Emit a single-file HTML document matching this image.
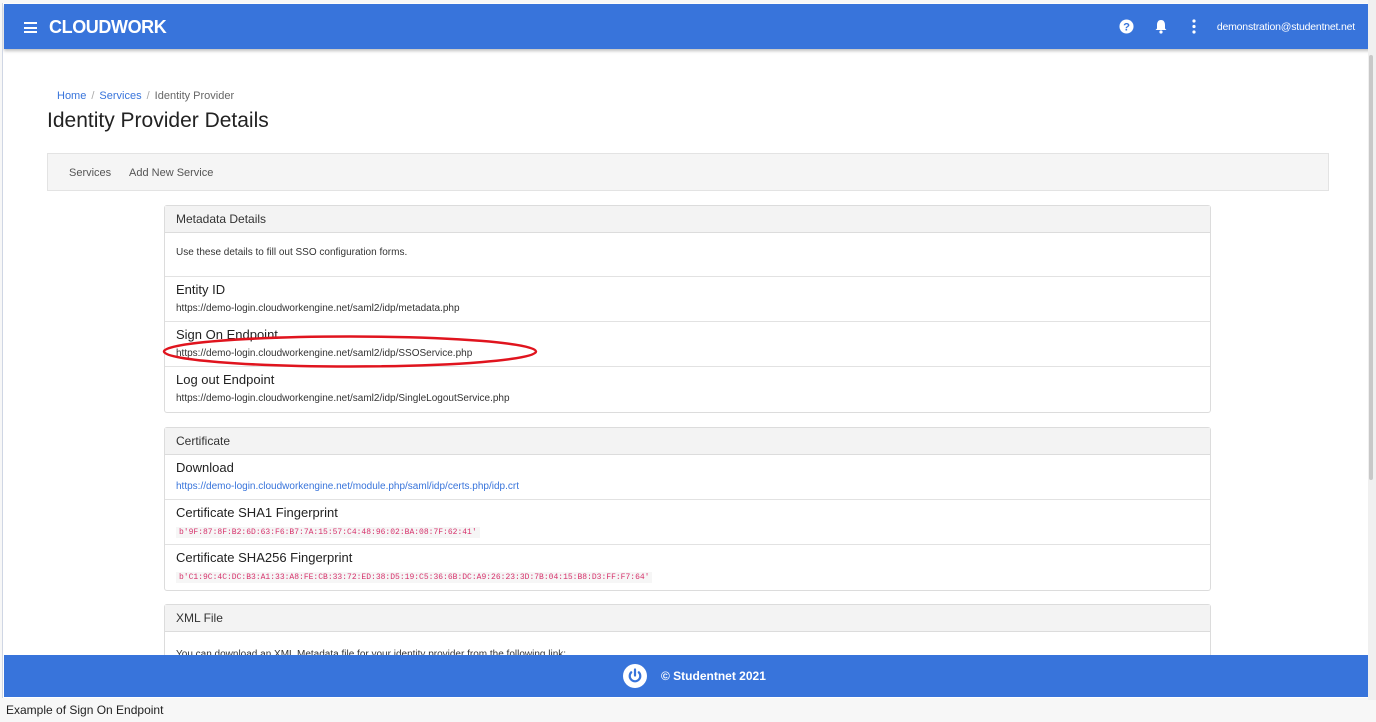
<!DOCTYPE html>
<html><head><style>
*{box-sizing:border-box;margin:0;padding:0}
body{width:1376px;height:722px;overflow:hidden;background:#f7f7f7;font-family:"Liberation Sans",Arial,sans-serif;position:relative}
.frame{position:absolute;left:2px;top:3px;width:1369px;height:695px;background:#fff;border-left:1px solid #cfd6e4;overflow:hidden}
.nav{position:absolute;left:1px;top:1px;right:0;height:45px;background:#3874db;box-shadow:0 2px 3px rgba(0,0,0,.25);color:#fff}
.logo{position:absolute;left:45px;top:13px;font-weight:bold;font-size:18px;letter-spacing:-.4px}
.ham{position:absolute;left:20px;top:18px;width:13px}
.ham i{display:block;height:2px;background:#fff;margin-bottom:2.5px}
.user{position:absolute;right:16px;top:17px;font-size:10.5px;letter-spacing:-.2px}
.sb{position:absolute;left:1368px;top:0;width:8px;height:700px;background:#f0f0f0}
.sb i{position:absolute;left:1px;top:55px;width:4px;height:425px;background:#c8c8c8;border-radius:2px}
.bc{position:absolute;left:54px;top:87px;font-size:11px;color:#666}
.bc a{color:#3874db}
.bc s{text-decoration:none;color:#aaa;margin:0 5px}
h1{position:absolute;left:44px;top:106px;font-weight:normal;font-size:21px;color:#222}
.tabs{position:absolute;left:44px;top:150px;width:1282px;height:38px;background:#f5f5f5;border:1px solid #e3e3e3;font-size:11px;color:#555}
.tabs span{position:absolute;top:13px}
.card{position:absolute;left:161px;width:1047px;border:1px solid #dcdcdc;border-radius:3px;background:#fff}
.hd{height:27px;background:#f3f3f3;border-bottom:1px solid #dcdcdc;font-size:12px;color:#333;padding:6px 11px}
.row{height:45px;border-bottom:1px solid #e2e2e2;padding:5px 11px}
.row:last-child{border-bottom:0}
.row b{display:block;font-weight:normal;font-size:13px;color:#222;margin-bottom:1px}
.row small{font-size:10px;color:#333}
.row a{font-size:10px;color:#3874db}
code{font-family:"Liberation Mono",monospace;font-size:8px;color:#d6336c;background:#f6f6f6;padding:1px 3px}
.foot{position:absolute;left:1px;top:652px;right:0;height:42px;background:#3874db;color:#fff;font-size:12px;font-weight:bold}
.cap{position:absolute;left:6px;top:703px;font-size:12px;color:#222}
</style></head><body>
<div class="frame">
<div class="nav">
<div class="ham"><i></i><i></i><i></i></div>
<div class="logo">CLOUDWORK</div>
<svg style="position:absolute;left:1115px;top:15px" width="15" height="15" viewBox="0 0 16 16"><circle cx="8" cy="8" r="7.5" fill="#fff"/><text x="8" y="12.5" font-size="12" font-weight="bold" text-anchor="middle" fill="#3874db" font-family="Liberation Sans">?</text></svg>
<svg style="position:absolute;left:1150px;top:15px" width="14" height="15" viewBox="0 0 14 15"><path d="M7 1c-3 0-4 2.5-4 5v3.5L1.5 11h11L11 9.5V6c0-2.5-1-5-4-5z" fill="#fff"/><circle cx="7" cy="13" r="1.6" fill="#fff"/></svg>
<svg style="position:absolute;left:1188px;top:15px" width="4" height="15"><circle cx="2" cy="2" r="1.6" fill="#fff"/><circle cx="2" cy="7.5" r="1.6" fill="#fff"/><circle cx="2" cy="13" r="1.6" fill="#fff"/></svg>
<div class="user">demonstration@studentnet.net</div>
</div>
<div class="bc"><a>Home</a><s>/</s><a>Services</a><s>/</s>Identity Provider</div>
<h1>Identity Provider Details</h1>
<div class="tabs"><span style="left:21px">Services</span><span style="left:81px">Add New Service</span></div>
<div class="card" style="top:202px">
<div class="hd">Metadata Details</div>
<div class="row" style="height:44px;padding-top:9px"><small>Use these details to fill out SSO configuration forms.</small></div>
<div class="row"><b>Entity ID</b><small>https://demo-login.cloudworkengine.net/saml2/idp/metadata.php</small></div>
<div class="row"><b>Sign On Endpoint</b><small>https://demo-login.cloudworkengine.net/saml2/idp/SSOService.php</small></div>
<div class="row"><b>Log out Endpoint</b><small>https://demo-login.cloudworkengine.net/saml2/idp/SingleLogoutService.php</small></div>
</div>
<div class="card" style="top:424px">
<div class="hd">Certificate</div>
<div class="row"><b>Download</b><a>https://demo-login.cloudworkengine.net/module.php/saml/idp/certs.php/idp.crt</a></div>
<div class="row"><b>Certificate SHA1 Fingerprint</b><code>b'9F:87:8F:B2:6D:63:F6:B7:7A:15:57:C4:48:96:02:BA:08:7F:62:41'</code></div>
<div class="row"><b>Certificate SHA256 Fingerprint</b><code>b'C1:9C:4C:DC:B3:A1:33:A8:FE:CB:33:72:ED:38:D5:19:C5:36:6B:DC:A9:26:23:3D:7B:04:15:B8:D3:FF:F7:64'</code></div>
</div>
<div class="card" style="top:601px;height:80px">
<div class="hd">XML File</div>
<div class="row" style="padding-top:12px"><small>You can download an XML Metadata file for your identity provider from the following link:</small></div>
</div>
<svg style="position:absolute;left:158px;top:331px" width="382" height="36"><ellipse cx="189" cy="17.5" rx="186" ry="15" fill="none" stroke="#e0141e" stroke-width="2.5"/></svg>
<div class="foot">
<svg style="position:absolute;left:619px;top:9px" width="24" height="24" viewBox="0 0 24 24"><circle cx="12" cy="12" r="12" fill="#fff"/><path d="M8.2 8.3a5.3 5.3 0 1 0 7.6 0" fill="none" stroke="#3874db" stroke-width="2.2" stroke-linecap="round"/><line x1="12" y1="5.5" x2="12" y2="11.5" stroke="#3874db" stroke-width="2.2" stroke-linecap="round"/></svg>
<span style="position:absolute;left:657px;top:14px">© Studentnet 2021</span>
</div>
</div>
<div class="sb"><i></i></div>
<div class="cap">Example of Sign On Endpoint</div>
</body></html>
